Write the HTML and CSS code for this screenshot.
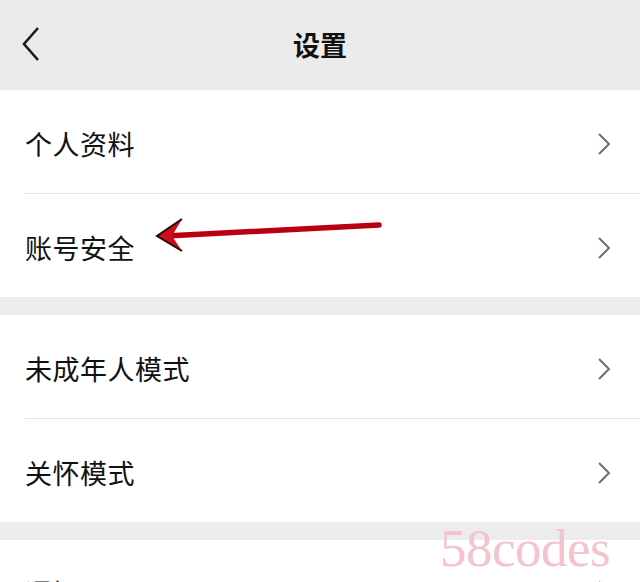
FILE: index.html
```html
<!DOCTYPE html>
<html lang="zh">
<head>
<meta charset="utf-8">
<title>设置</title>
<link rel="stylesheet" href="styles.css">
</head>
<body>
<div class="page">
  <header class="topbar">
    <div class="back">
      <svg width="20" height="36" viewBox="0 0 20 36"><polyline points="17,2 3,18 17,34" fill="none" stroke="#1a1a1a" stroke-width="2.6" stroke-linejoin="miter"/></svg>
    </div>
    <h1 class="title">设置</h1>
    <div></div>
  </header>

  <section class="group">
    <div class="row"><span class="label">个人资料</span><svg class="chev" width="14" height="24" viewBox="0 0 14 24"><polyline points="2,2 12,12 2,22" fill="none" stroke="#6e6e6e" stroke-width="2"/></svg></div>
    <div class="row"><span class="label">账号安全</span><svg class="chev" width="14" height="24" viewBox="0 0 14 24"><polyline points="2,2 12,12 2,22" fill="none" stroke="#6e6e6e" stroke-width="2"/></svg></div>
  </section>

  <section class="group">
    <div class="row"><span class="label">未成年人模式</span><svg class="chev" width="14" height="24" viewBox="0 0 14 24"><polyline points="2,2 12,12 2,22" fill="none" stroke="#6e6e6e" stroke-width="2"/></svg></div>
    <div class="row"><span class="label">关怀模式</span><svg class="chev" width="14" height="24" viewBox="0 0 14 24"><polyline points="2,2 12,12 2,22" fill="none" stroke="#6e6e6e" stroke-width="2"/></svg></div>
  </section>

  <section class="group">
    <div class="row row-last"><span class="label">通知</span><svg class="chev" width="14" height="24" viewBox="0 0 14 24"><polyline points="2,2 12,12 2,22" fill="none" stroke="#6e6e6e" stroke-width="2"/></svg></div>
  </section>

  <svg class="arrow" width="640" height="582" viewBox="0 0 640 582">
    <line x1="379" y1="225" x2="166" y2="236" stroke="#b80010" stroke-width="5.5" stroke-linecap="round"/>
    <polygon points="157,236 182,219 172,236 182,251" fill="#c8101c"/>
    <polyline points="182,219 157,236 182,251" fill="none" stroke="#2a0606" stroke-width="2"/>
  </svg>

  <div class="watermark">58codes</div>
</div>
</body>
</html>
```

FILE: styles.css
```css
html, body {
  margin: 0;
  padding: 0;
}
body {
  background: #ececec;
  font-family: "Noto Sans CJK SC", "Noto Sans", sans-serif;
  color: #111;
  overflow: hidden;
}
.page {
  position: relative;
  width: 640px;
  height: 582px;
  overflow: hidden;
}
.topbar {
  height: 90px;
  background: #ebebeb;
  display: grid;
  grid-template-columns: 80px 1fr 80px;
  align-items: center;
}
.back {
  padding-left: 21px;
  display: flex;
  align-items: center;
  margin-top: -2px;
}
.title {
  margin: 0;
  text-align: center;
  font-size: 27px;
  font-weight: 700;
  color: #111;
  margin-top: -2px;
}
.group {
  background: #fff;
  margin-bottom: 18px;
}
.row {
  height: 103px;
  display: flex;
  align-items: center;
  justify-content: space-between;
  padding: 0 29px 0 25px;
  position: relative;
}
.row + .row::before {
  content: "";
  position: absolute;
  left: 25px;
  right: 0;
  top: -1px;
  height: 1px;
  background: #e4e4e4;
}
.row + .row {
  margin-top: 1px;
}
.row-last {
  align-items: flex-start;
  padding-top: 36px;
  box-sizing: border-box;
}
.label {
  font-size: 27px;
  letter-spacing: 0.5px;
  line-height: 1;
  margin-top: 3px;
}
.chev {
  margin-top: 4px;
}
.arrow {
  position: absolute;
  left: 0;
  top: 0;
  pointer-events: none;
}
.watermark {
  position: absolute;
  left: 440px;
  top: 518px;
  font-family: "Liberation Serif", serif;
  font-size: 53px;
  color: #f5c3cc;
  letter-spacing: -0.5px;
}
```
